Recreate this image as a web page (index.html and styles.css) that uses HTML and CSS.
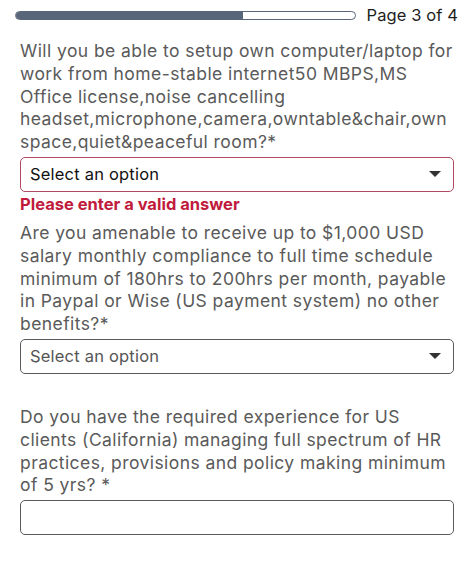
FILE: index.html
```html
<!DOCTYPE html>
<html lang="en">
<head>
    <meta charset="UTF-8">
    <meta name="viewport" content="width=device-width, initial-scale=1.0">
    <title>Application - Page 3 of 4</title>
    <link rel="stylesheet" href="styles.css">
</head>
<body>
    <div class="progress-row">
        <div class="progress-track">
            <div class="progress-fill" style="width: 67%;"></div>
        </div>
        <span class="page-label">Page 3 of 4</span>
    </div>

    <form class="survey">
        <div class="field">
            <label class="question">Will you be able to setup own computer/laptop for work from home-stable internet50 MBPS,MS Office license,noise cancelling headset,microphone,camera,owntable&amp;chair,own space,quiet&amp;peaceful room?*</label>
            <div class="select-box invalid">
                <span class="select-value">Select an option</span>
                <span class="caret"></span>
            </div>
            <p class="error">Please enter a valid answer</p>
        </div>

        <div class="field">
            <label class="question">Are you amenable to receive up to $1,000 USD salary monthly compliance to full time schedule minimum of 180hrs to 200hrs per month, payable in Paypal or Wise (US payment system) no other benefits?*</label>
            <div class="select-box">
                <span class="select-value">Select an option</span>
                <span class="caret"></span>
            </div>
            <p class="error"></p>
        </div>

        <div class="field">
            <label class="question">Do you have the required experience for US clients (California) managing full spectrum of HR practices, provisions and policy making minimum of 5 yrs? *</label>
            <input type="text" class="text-input">
        </div>
    </form>
</body>
</html>
```

FILE: styles.css
```css
body {
    font-family: Inter, "Noto Sans", sans-serif;
    margin: 0;
    padding: 0 20px;
    background-color: #ffffff;
    color: #222;
}
.progress-row {
    display: flex;
    align-items: center;
    gap: 11px;
    margin-left: -5px;
    padding-top: 5px;
    height: 20px;
}
.progress-track {
    flex: 1;
    height: 7px;
    border: 1px solid #58667a;
    border-radius: 5px;
    background-color: #fff;
    overflow: hidden;
}
.progress-fill {
    height: 100%;
    background-color: #58667a;
}
.page-label {
    font-size: 16.5px;
    letter-spacing: 0.1px;
    color: #1e1e1e;
    margin-right: -4px;
}
.survey {
    margin-top: 15px;
}
.question {
    display: block;
    font-size: 17.5px;
    line-height: 22.8px;
    letter-spacing: 0.42px;
    color: #5a5a5a;
}
.select-box {
    display: flex;
    align-items: center;
    justify-content: space-between;
    height: 33px;
    margin-top: 3px;
    padding: 0 12px 0 9px;
    border: 1px solid #5a5a5a;
    border-radius: 5px;
}
.select-box.invalid {
    border-color: #b04a62;
}
.select-value {
    font-size: 16.5px;
    letter-spacing: 0.2px;
    color: #555;
}
.invalid .select-value {
    color: #111;
}
.caret {
    width: 0;
    height: 0;
    border-left: 6px solid transparent;
    border-right: 6px solid transparent;
    border-top: 6px solid #333;
}
.error {
    margin: 2px 0 8px;
    min-height: 20px;
    font-size: 16.5px;
    line-height: 20px;
    font-weight: 700;
    color: #c01a3c;
}
.field:nth-child(2) .error {
    min-height: 22px;
}
.text-input {
    display: block;
    box-sizing: border-box;
    width: 100%;
    height: 35px;
    margin-top: 3px;
    border: 1px solid #5a5a5a;
    border-radius: 5px;
    font-size: 16px;
}
```
